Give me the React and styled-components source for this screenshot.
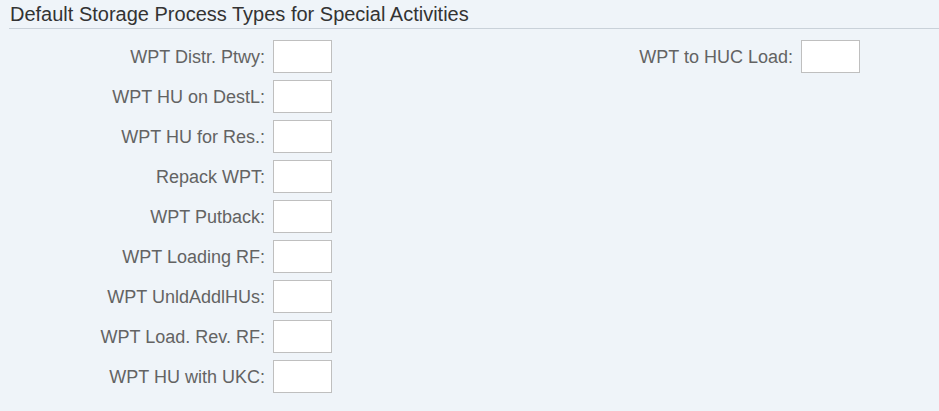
import React from "react";
import styled, { createGlobalStyle } from "styled-components";

const GlobalStyle = createGlobalStyle`
  html, body {
    margin: 0;
    padding: 0;
    background: #eff4f9;
  }
  body {
    font-family: "Liberation Sans", Arial, sans-serif;
  }
`;

const Page = styled.div`
  width: 939px;
  height: 411px;
  padding-left: 9px;
  box-sizing: border-box;
  background: #eff4f9;
  overflow: hidden;
`;

const Title = styled.h2`
  margin: 0;
  padding: 2px 0 0 1px;
  height: 26px;
  font-size: 20px;
  font-weight: normal;
  line-height: 24px;
  color: #333333;
  border-bottom: 1px solid #c9d1d9;
`;

const Form = styled.div`
  display: grid;
  grid-template-columns: 256px 59px 453px 59px;
  grid-auto-rows: 33px;
  column-gap: 8px;
  row-gap: 7px;
  margin-top: 11px;
`;

const Label = styled.label`
  grid-column: ${(p) => (p.$right ? 3 : 1)};
  grid-row: ${(p) => p.$row};
  align-self: center;
  text-align: right;
  font-size: 18px;
  line-height: 22px;
  color: #636363;
  white-space: nowrap;
`;

const Field = styled.input`
  grid-column: ${(p) => (p.$right ? 4 : 2)};
  grid-row: ${(p) => p.$row};
  box-sizing: border-box;
  width: 59px;
  height: 33px;
  margin: 0;
  padding: 0 6px;
  border: 1px solid #bfbfbf;
  border-radius: 0;
  background: #ffffff;
  font-family: inherit;
  font-size: 14px;
  outline: none;
`;

const leftFields = [
  "WPT Distr. Ptwy:",
  "WPT HU on DestL:",
  "WPT HU for Res.:",
  "Repack WPT:",
  "WPT Putback:",
  "WPT Loading RF:",
  "WPT UnldAddlHUs:",
  "WPT Load. Rev. RF:",
  "WPT HU with UKC:",
];

const App = () => {
  return (
    <>
      <GlobalStyle />
      <Page>
        <Title>Default Storage Process Types for Special Activities</Title>
        <Form>
          {leftFields.map((label, i) => (
            <React.Fragment key={label}>
              <Label $row={i + 1}>{label}</Label>
              <Field $row={i + 1} />
            </React.Fragment>
          ))}
          <Label $row={1} $right>
            WPT to HUC Load:
          </Label>
          <Field $row={1} $right />
        </Form>
      </Page>
    </>
  );
};

export default App;
